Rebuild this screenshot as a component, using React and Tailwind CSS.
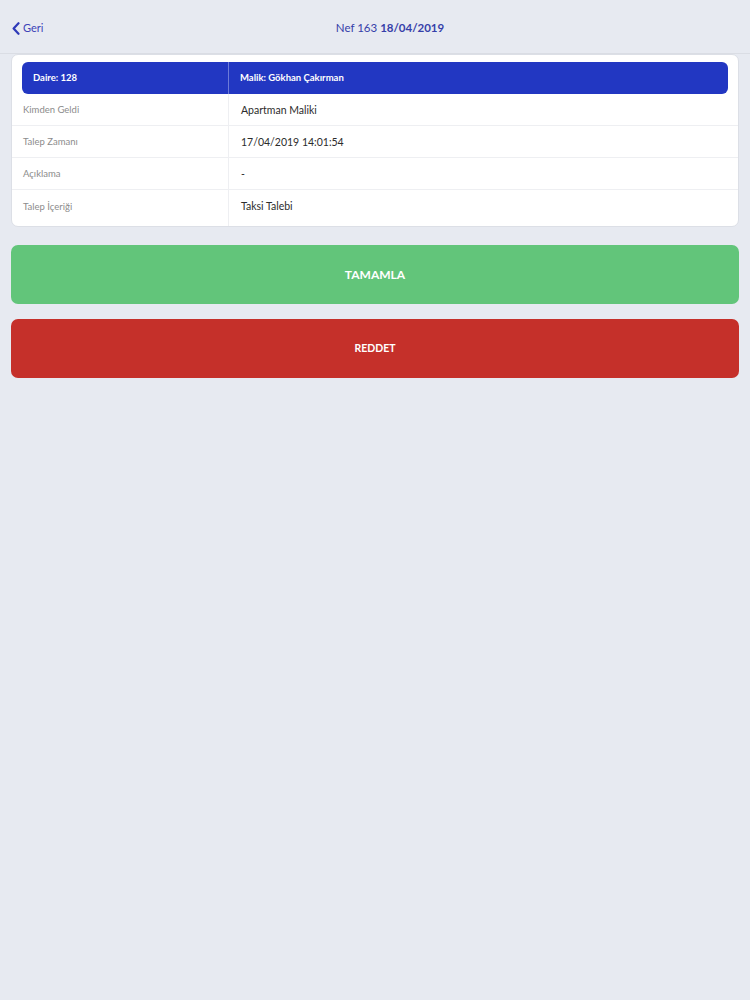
export default function App() {
  const rows = [
    ['Kimden Geldi', 'Apartman Maliki'],
    ['Talep Zamanı', '17/04/2019 14:01:54'],
    ['Açıklama', '-'],
    ['Talep İçeriği', 'Taksi Talebi'],
  ];

  return (
    <div className="min-h-screen w-full bg-[#e7eaf1] font-['Lato','Open_Sans',sans-serif]">
      <div className="relative flex h-[54px] items-center justify-center border-b border-[#dadde4]">
        <button className="absolute left-[12px] top-[20px] flex items-center gap-[3px] text-[11px] text-[#3c44b8]">
          <svg width="8" height="13" viewBox="0 0 8 13" fill="none">
            <path d="M6.5 1.2L1.6 6.5l4.9 5.3" stroke="#2f3ab8" strokeWidth="2.2" strokeLinecap="round" strokeLinejoin="round" />
          </svg>
          Geri
        </button>
        <div className="ml-[30px] mt-[2px] text-[11.5px] text-[#363fa9]">
          Nef 163 <span className="font-bold">18/04/2019</span>
        </div>
      </div>

      <div className="px-[11px]">
        <div className="overflow-hidden rounded-[7px] border border-[#dcdfe6] bg-white pt-[7px]">
          <div className="mx-[10px] flex h-[32px] items-center rounded-[6px] bg-[#2237c2] text-[9.5px] font-bold text-white">
            <div className="flex h-full w-[207px] items-center border-r border-[#6d7bd8] pl-[11px]">Daire: 128</div>
            <div className="pl-[11px]">Malik: Gökhan Çakırman</div>
          </div>
          {rows.map(([label, value], i) => {
            const last = i === rows.length - 1;
            return (
              <div
                key={label}
                className={`flex ${last ? 'h-[36px]' : 'h-[32px] border-b border-[#eeeff2]'}`}
              >
                <div className={`flex w-[217px] items-center border-r border-[#eeeff2] pl-[11px] text-[9.5px] text-[#8c8c8c] ${last ? 'pb-[2px]' : 'pt-[2px]'}`}>
                  {label}
                </div>
                <div className={`flex items-center pl-[12px] text-[10.5px] text-[#2c2c2c] ${last ? 'pb-[2px]' : 'pt-[2px]'}`}>
                  {value}
                </div>
              </div>
            );
          })}
        </div>

        <button className="mt-[18px] flex h-[59px] w-full items-center justify-center rounded-[7px] bg-[#62c57a] text-[12px] font-bold text-white">
          TAMAMLA
        </button>
        <button className="mt-[15px] flex h-[59px] w-full items-center justify-center rounded-[7px] bg-[#c5302a] text-[10.5px] font-bold text-white">
          REDDET
        </button>
      </div>
    </div>
  );
}
